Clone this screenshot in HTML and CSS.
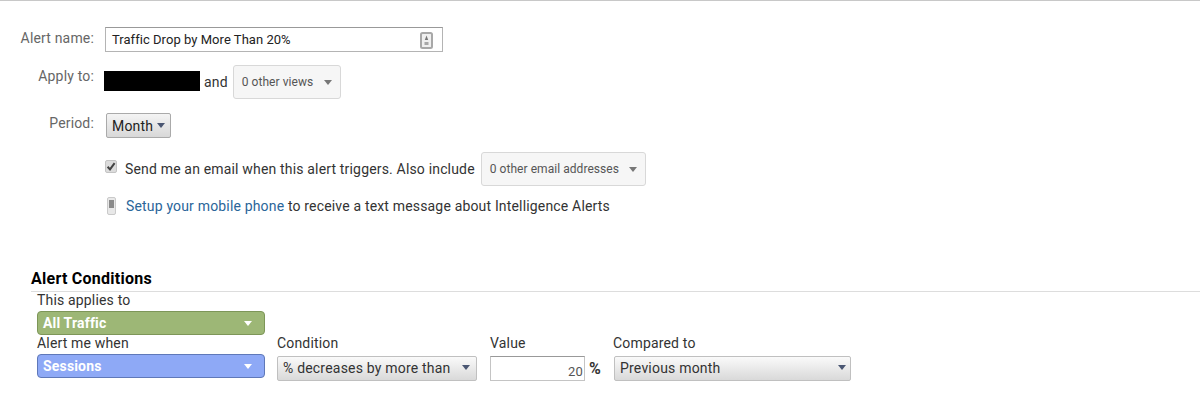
FILE: index.html
```html
<!DOCTYPE html>
<html lang="en">
<head>
	<meta charset="UTF-8">
	<title>Alert</title>
	<link rel="stylesheet" href="styles.css">
</head>
<body>
	<form class="settings">
		<div class="row row-name">
			<label class="label">Alert name:</label>
			<div class="name-box">
				<span>Traffic Drop by More Than 20%</span>
				<svg class="contact-icon" width="13" height="17" viewBox="0 0 13 17">
					<rect x="1" y="1" width="11" height="15" rx="1.5" fill="#f0f0f0" stroke="#a8a8a8" stroke-width="2"/>
					<path d="M6.5 3.6 L8.2 8 H4.8 Z" fill="#777"/>
					<rect x="4.5" y="10" width="4" height="3" fill="#a8a8a8"/>
				</svg>
			</div>
		</div>
		<div class="row row-apply">
			<label class="label">Apply to:</label>
			<div class="apply-value">
				<span class="redacted"></span>
				<span class="and">and</span>
				<button class="menu views" type="button">0 other views<i class="caret"></i></button>
			</div>
		</div>
		<div class="row row-period">
			<label class="label">Period:</label>
			<button class="period" type="button">Month<i class="caret caret-blue"></i></button>
		</div>
		<div class="row row-email">
			<span class="check">
				<svg width="12" height="13" viewBox="0 0 12 13">
					<rect x="0.5" y="0.5" width="11" height="12" rx="1.5" fill="#dcdcdc" stroke="#c4c4c4"/>
					<path d="M2.6 6.8 L5 9.4 L9.6 3.2" fill="none" stroke="#444" stroke-width="2"/>
				</svg>
			</span>
			<span class="email-text">Send me an email when this alert triggers. Also include</span>
			<button class="menu emails" type="button">0 other email addresses<i class="caret"></i></button>
		</div>
		<div class="row row-phone">
			<svg class="phone" width="9" height="18" viewBox="0 0 9 18">
				<rect x="0.5" y="0.5" width="8" height="17" rx="1.5" fill="#e8e8e8" stroke="#cacaca"/>
				<rect x="2" y="3" width="5" height="8" fill="#8a8a8a"/>
			</svg>
			<span><a href="##">Setup your mobile phone</a> to receive a text message about Intelligence Alerts</span>
		</div>
	</form>

	<h2 class="heading">Alert Conditions</h2>
	<div class="conditions">
		<div class="field">
			<label>This applies to</label>
			<button class="pill pill-green" type="button">All Traffic<i class="caret caret-white"></i></button>
		</div>
		<div class="cond-row">
			<div class="field">
				<label>Alert me when</label>
				<button class="pill pill-blue" type="button">Sessions<i class="caret caret-white"></i></button>
			</div>
			<div class="field field-condition">
				<label>Condition</label>
				<button class="select select-condition" type="button">% decreases by more than<i class="caret caret-blue"></i></button>
			</div>
			<div class="field field-value">
				<label>Value</label>
				<div class="value-wrap">
					<div class="value-box">20</div>
					<b>%</b>
				</div>
			</div>
			<div class="field field-compare">
				<label>Compared to</label>
				<button class="select select-compare" type="button">Previous month<i class="caret caret-blue"></i></button>
			</div>
		</div>
	</div>
</body>
</html>
```

FILE: styles.css
```css
html,
body {
	margin: 0;
	padding: 0;
}

body {
	height: 400px;
	overflow: hidden;
	border-top: 1px solid #c8c8c8;
	box-sizing: border-box;
	background: #fff;
	color: #222;
	font: 14px/16px Roboto, "Liberation Sans", sans-serif;
	letter-spacing: 0.17px;
}

button {
	margin: 0;
	font-family: inherit;
	letter-spacing: inherit;
	cursor: pointer;
}

/* top form */
.settings {
	padding-top: 26px;
	height: 268px;
	box-sizing: border-box;
}

.row {
	display: flex;
}

.label {
	flex: none;
	width: 94px;
	color: #666;
	text-align: right;
}

.row-name .label {
	padding-top: 3px;
}

.name-box {
	display: flex;
	align-items: center;
	justify-content: space-between;
	width: 338px;
	height: 25px;
	margin-left: 11px;
	padding: 1px 9px 0 6px;
	box-sizing: border-box;
	border: 1px solid #b4b4b4;
	border-top-color: #999;
	font-size: 13px;
	letter-spacing: 0.04px;
}

.row-apply {
	margin-top: 13px;
}

.row-apply .label {
	padding-top: 3px;
}

.apply-value {
	display: flex;
	align-items: center;
	margin-left: 10px;
}

.redacted {
	width: 96px;
	height: 20px;
	margin-top: -2px;
	background: #000;
}

.and {
	margin: 0 5px 0 4px;
	color: #333;
}

.menu {
	display: flex;
	align-items: center;
	justify-content: space-between;
	height: 34px;
	padding: 0 8px;
	border: 1px solid #d8d8d8;
	border-radius: 3px;
	background: #f6f6f6;
	color: #555;
	font-size: 12px;
	letter-spacing: 0.05px;
}

.views {
	width: 108px;
}

.emails {
	width: 165px;
	margin-left: 6px;
}

.caret {
	flex: none;
	width: 0;
	height: 0;
	border-top: 5px solid #777;
	border-left: 4px solid transparent;
	border-right: 4px solid transparent;
}

.caret-blue {
	border-top-color: #4a5672;
}

.caret-white {
	border-top-color: #fff;
}

.row-period {
	margin-top: 14px;
}

.row-period .label {
	padding-top: 2px;
}

.period {
	display: flex;
	align-items: center;
	justify-content: space-between;
	width: 65px;
	height: 25px;
	margin-left: 12px;
	padding: 0 5px;
	border: 1px solid #aaa;
	border-radius: 2px;
	background: linear-gradient(#f4f4f4, #d8d8d8);
	color: #222;
	font-size: 14px;
}

.row-email {
	align-items: center;
	margin: 14px 0 0 105px;
}

.check {
	display: flex;
	margin: -6px 8px 0 0;
}

.email-text {
	color: #333;
}

.row-phone {
	align-items: center;
	margin: 11px 0 0 107px;
	color: #333;
}

.phone {
	margin-right: 10px;
}

a {
	color: #2a6599;
	text-decoration: none;
}

/* conditions */
.heading {
	margin: 0 0 0 31px;
	padding-bottom: 2px;
	border-bottom: 1px solid #ddd;
	color: #000;
	font-size: 16px;
	line-height: 20px;
	font-weight: bold;
	letter-spacing: 0.25px;
}

.conditions {
	padding: 0 0 0 37px;
}

.field label {
	display: block;
	height: 19px;
	line-height: 17px;
	color: #333;
}

.cond-row {
	display: flex;
}

.pill {
	display: flex;
	align-items: center;
	justify-content: space-between;
	width: 228px;
	height: 24px;
	padding: 0 12px 0 5px;
	border-radius: 4px;
	color: #fff;
	font-size: 14px;
	font-weight: bold;
}

.pill-green {
	border: 1px solid #7d9658;
	background: #9db776;
}

.pill-blue {
	border: 1px solid #5f78b8;
	background: #8ea9f6;
}

.field-condition {
	margin-left: 12px;
}

.field-condition label,
.field-value label,
.field-compare label {
	height: 21px;
}

.select {
	display: flex;
	align-items: center;
	justify-content: space-between;
	height: 25px;
	padding: 0 6px 2px 5px;
	border: 1px solid #c0c0c0;
	border-radius: 2px;
	background: linear-gradient(#fafafa, #d9d9d9);
	color: #333;
	font-size: 14px;
	letter-spacing: 0.2px;
}

.select-condition {
	width: 200px;
}

.select-compare {
	width: 237px;
	padding-right: 4px;
}

.field-value {
	width: 111px;
	margin-left: 13px;
}

.value-wrap {
	display: flex;
	align-items: center;
}

.value-wrap b {
	margin-left: 4px;
	color: #333;
	font-size: 16px;
}

.value-box {
	flex: none;
	width: 95px;
	height: 25px;
	padding: 7px 1px 0 0;
	box-sizing: border-box;
	border: 1px solid #c4c4c4;
	border-top-color: #999;
	color: #555;
	font-size: 13px;
	text-align: right;
}

.field-compare {
	margin-left: 13px;
}

.field-compare label {
	margin-left: -1px;
}
```
